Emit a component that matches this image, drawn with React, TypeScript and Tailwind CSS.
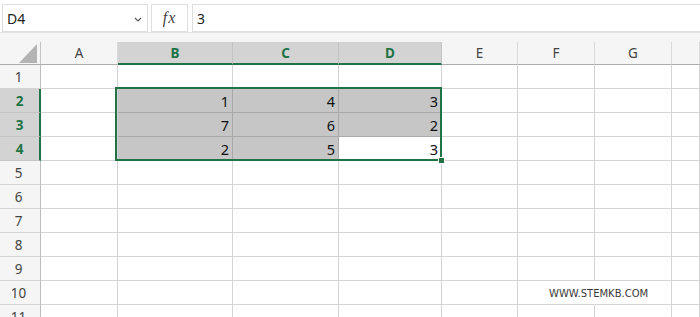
import React from "react";

type Col = { k: string; w: string };

const cols: Col[] = [
  { k: "A", w: "w-[77px]" },
  { k: "B", w: "w-[115px]" },
  { k: "C", w: "w-[106px]" },
  { k: "D", w: "w-[103px]" },
  { k: "E", w: "w-[76px]" },
  { k: "F", w: "w-[77px]" },
  { k: "G", w: "w-[77px]" },
  { k: "", w: "flex-1" },
];

const data: Record<string, number> = {
  B2: 1,
  C2: 4,
  D2: 3,
  B3: 7,
  C3: 6,
  D3: 2,
  B4: 2,
  C4: 5,
  D4: 3,
};

const selCols = ["B", "C", "D"];
const selRows = [2, 3, 4];

function Cell({ col, row }: { col: Col; row: number }) {
  const key = col.k + row;
  const inSel = selCols.includes(col.k) && selRows.includes(row);
  const active = key === "D4";
  const value = data[key];
  const isWatermark = col.k === "F" && row === 10;

  let cls = `${col.w} h-[24px] shrink-0 border-r border-b flex items-center justify-end pr-[3px] pt-[2px] text-[14.5px] text-[#111]`;
  if (inSel && !active) {
    cls += " bg-[#c6c6c6] border-[#a9a9a9]";
  } else if (active) {
    cls += " bg-white border-[#a9a9a9]";
  } else {
    cls += " bg-white border-[#d4d4d4]";
  }
  if (isWatermark) {
    return (
      <div className={`${col.w} h-[24px] shrink-0 border-b border-[#d4d4d4] border-r border-r-transparent bg-white relative z-10 flex items-center`}>
        <span className="whitespace-nowrap pl-[31px] pt-[1px] font-['DejaVu_Sans',sans-serif] text-[10px] text-[#3a3a3a]">
          WWW.STEMKB.COM
        </span>
      </div>
    );
  }
  return <div className={cls}>{value !== undefined ? value : ""}</div>;
}

export default function App() {
  const rows = [1, 2, 3, 4, 5, 6, 7, 8, 9, 10, 11];
  return (
    <div className="relative h-[317px] w-[700px] overflow-hidden bg-white font-['Noto_Sans',sans-serif]">
      {/* Formula bar */}
      <div className="flex h-[32px] items-start pt-[4px] bg-white">
        <div className="ml-[2px] flex h-[28px] w-[146px] items-center justify-between border border-[#dedede] bg-white pl-[4px] pr-[5px]">
          <span className="text-[14px] text-[#222]">D4</span>
          <svg width="8" height="5" viewBox="0 0 8 5" className="mt-[2px]">
            <path d="M1 1 L4 4 L7 1" fill="none" stroke="#555" strokeWidth="1.1" />
          </svg>
        </div>
        <div className="ml-[3px] flex h-[28px] w-[37px] items-center justify-center border border-[#dedede] bg-white">
          <span className="font-['Liberation_Serif',serif] italic text-[16px] text-[#444] tracking-[1px]">fx</span>
        </div>
        <div className="ml-[4px] flex h-[28px] flex-1 items-center border border-r-0 border-[#dedede] bg-white pl-[4px]">
          <span className="text-[14px] text-[#222]">3</span>
        </div>
      </div>

      {/* gray band */}
      <div className="h-[10px] border-t border-[#e3e3e3] bg-[#f5f5f5]" />

      {/* Column header row */}
      <div className="flex h-[23px] bg-[#f5f5f5]">
        <div className="flex w-[41px] shrink-0 items-end justify-end border-r border-b border-r-[#c4c4c4] border-b-[#acacac] pr-[3px] pb-[1px]">
          <svg width="18" height="19" viewBox="0 0 18 19">
            <polygon points="0,19 18,19 18,0" fill="#b4b4b4" />
          </svg>
        </div>
        {cols.map((c) => {
          const sel = selCols.includes(c.k);
          return (
            <div
              key={c.k || "end"}
              className={
                sel
                  ? `${c.w} shrink-0 flex items-center justify-center border-r border-r-[#c4c4c4] border-b-2 border-b-[#217346] bg-[#d3d3d3] pt-[1px] text-[13.5px] font-bold text-[#217346]`
                  : `${c.w} shrink-0 flex items-center justify-center border-r border-r-[#dadada] border-b border-b-[#acacac] text-[13.5px] text-[#444]`
              }
            >
              {c.k}
            </div>
          );
        })}
      </div>

      {/* Rows */}
      {rows.map((r) => {
        const sel = selRows.includes(r);
        return (
          <div key={r} className="flex">
            <div
              className={
                sel
                  ? "flex h-[24px] w-[41px] shrink-0 items-center justify-center border-b border-b-[#c4c4c4] border-r-2 border-r-[#217346] bg-[#d3d3d3] pt-[1px] text-[13.5px] font-bold text-[#217346]"
                  : "flex h-[24px] w-[41px] shrink-0 items-center justify-center border-b border-b-[#d4d4d4] border-r border-r-[#bdbdbd] bg-[#f5f5f5] pr-[3px] pt-[1px] text-[13.5px] text-[#444]"
              }
            >
              {r}
            </div>
            {cols.map((c) => (
              <Cell key={c.k + r} col={c} row={r} />
            ))}
          </div>
        );
      })}

      {/* Selection overlay */}
      <div className="pointer-events-none absolute left-[115px] top-[87px] h-[74px] w-[327px] border-2 border-[#217346]" />
      <div className="pointer-events-none absolute left-[438px] top-[157px] h-[7px] w-[7px] border border-white bg-[#217346]" />
    </div>
  );
}
